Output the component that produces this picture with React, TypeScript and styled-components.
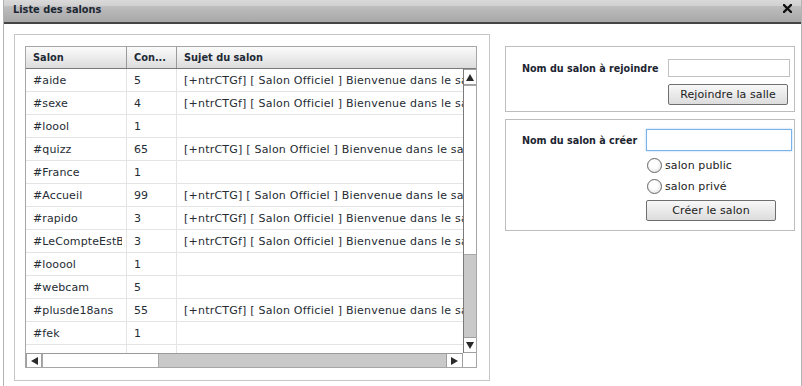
import styled, { createGlobalStyle } from 'styled-components';

const GlobalStyle = createGlobalStyle`
  html, body {
    margin: 0;
    padding: 0;
    background: #ffffff;
  }
  body {
    font-family: "DejaVu Sans", Verdana, sans-serif;
    font-size: 11px;
    color: #222;
  }
`;

const Dialog = styled.div`
  width: 797px;
  height: 386px;
  margin-left: 3px;
  border-left: 1px solid #b3b3b3;
  border-right: 1px solid #b3b3b3;
  background: #fff;
  display: flex;
  flex-direction: column;
  overflow: hidden;
`;

const TitleBar = styled.div`
  height: 24px;
  flex: 0 0 24px;
  border-bottom: 2px solid #454545;
  background: linear-gradient(#dadada 0%, #d0d0d0 26%, #bdbdbd 30%, #a8a8a8 100%);
  display: flex;
  align-items: flex-start;
  justify-content: space-between;
  padding: 3px 9px 0 9px;
  box-sizing: border-box;
`;

const Title = styled.span`
  font-weight: bold;
  font-size: 9.8px;
  line-height: 13px;
  color: #1c2733;
`;

const CloseButton = styled.button`
  border: none;
  background: none;
  padding: 0;
  margin-top: 1px;
  width: 9px;
  height: 9px;
  display: flex;
  cursor: pointer;
`;

const Content = styled.div`
  display: flex;
  gap: 15px;
  padding: 10px 6px 0 10px;
`;

const LeftPanel = styled.div`
  width: 476px;
  height: 347px;
  box-sizing: border-box;
  border: 1px solid #c6c6c6;
  padding: 11px 12px 12px 10px;
`;

const GridFrame = styled.div`
  width: 452px;
  height: 322px;
  box-sizing: border-box;
  border: 1px solid #a6a6a6;
  display: grid;
  grid-template-columns: 437px 13px;
  grid-template-rows: 22px 284px 14px;
`;

const HeaderRow = styled.div`
  grid-column: 1 / 3;
  display: flex;
  box-sizing: border-box;
  border-bottom: 1px solid #7a7a7a;
  background: linear-gradient(#fbfbfb, #dcdcdc);
  overflow: hidden;
`;

const HeaderCell = styled.div<{ $w: number; $last?: boolean }>`
  flex: 0 0 ${(p) => p.$w}px;
  min-width: 0;
  box-sizing: border-box;
  border-right: ${(p) => (p.$last ? 'none' : '1px solid #9a9a9a')};
  padding: 1px 0 0 7px;
  font-weight: bold;
  font-size: 9.8px;
  line-height: 20px;
  white-space: nowrap;
  color: #1e2a36;
`;

const Body = styled.div`
  overflow: hidden;
`;

const Row = styled.div`
  display: flex;
  height: 23px;
  box-sizing: border-box;
  border-bottom: 1px solid #e4e4e4;
`;

const Cell = styled.div<{ $w: number; $last?: boolean; $spacing?: number }>`
  flex: 0 0 ${(p) => p.$w}px;
  min-width: 0;
  box-sizing: border-box;
  border-right: ${(p) => (p.$last ? 'none' : '1px solid #e4e4e4')};
  padding: 2px 4px 0 7px;
  line-height: 20px;
  letter-spacing: ${(p) => p.$spacing ?? 0.1}px;
  color: #262c33;
`;

const CellText = styled.span`
  display: block;
  white-space: nowrap;
  overflow: hidden;
`;

const VScroll = styled.div`
  border-left: 1px solid #7a7a7a;
  display: flex;
  flex-direction: column;
`;

const HScroll = styled.div`
  border-top: 1px solid #9a9a9a;
  display: flex;
`;

const Corner = styled.div`
  background: #fff;
`;

const ArrowBox = styled.div<{ $size: number; $vertical?: boolean }>`
  flex: 0 0 ${(p) => p.$size}px;
  box-sizing: border-box;
  background: #fff;
  border: 1px solid #a0a0a0;
  ${(p) => (p.$vertical ? 'border-left: none; border-right: none;' : 'border-top: none; border-bottom: none;')}
  display: flex;
  align-items: center;
  justify-content: center;
`;

const Thumb = styled.div<{ $size: number; $vertical?: boolean }>`
  flex: 0 0 ${(p) => p.$size}px;
  box-sizing: border-box;
  background: #fff;
  border: 1px solid #a8a8a8;
  ${(p) => (p.$vertical ? 'border-left: none; border-right: none;' : 'border-top: none; border-bottom: none;')}
`;

const Track = styled.div`
  flex: 1;
  background: #c9c9c9;
`;

const RightColumn = styled.div`
  width: 290px;
  margin-top: 12px;
  display: flex;
  flex-direction: column;
  gap: 7px;
`;

const FormBox = styled.div<{ $pad: string; $cols: string }>`
  box-sizing: border-box;
  border: 1px solid #bdbdbd;
  padding: ${(p) => p.$pad};
  display: grid;
  grid-template-columns: ${(p) => p.$cols};
  align-items: center;
`;

const Label = styled.label`
  font-weight: bold;
  font-size: 9.6px;
  color: #1c2530;
  white-space: nowrap;
`;

const TextInput = styled.input<{ $h: number; $focused?: boolean }>`
  box-sizing: border-box;
  width: 100%;
  height: ${(p) => p.$h}px;
  margin: 0;
  padding: 0 3px;
  font: inherit;
  border: 1px solid ${(p) => (p.$focused ? '#7cb2ea' : '#c2c2c2')};
  box-shadow: ${(p) => (p.$focused ? '0 0 2px #a9d0f5, inset 0 0 1px #cfe4f8' : 'none')};
  outline: none;
  background: #fff;
`;

const Button = styled.button<{ $w: number; $mt: number }>`
  grid-column: 2;
  width: ${(p) => p.$w}px;
  height: 21px;
  margin-top: ${(p) => p.$mt}px;
  padding: 0;
  font-family: inherit;
  font-size: 11px;
  letter-spacing: 0.1px;
  color: #222;
  border: 1px solid #6f6f6f;
  border-radius: 2px;
  background: linear-gradient(#f8f8f8, #dcdcdc);
  cursor: pointer;
`;

const RadioGroup = styled.div`
  grid-column: 2;
  margin-top: 4px;
  display: flex;
  flex-direction: column;
`;

const RadioRow = styled.label`
  height: 21px;
  display: flex;
  align-items: center;
  gap: 3px;
  padding-left: 1px;
  letter-spacing: 0.1px;
  color: #222;
`;

const Radio = styled.input`
  appearance: none;
  margin: 0;
  width: 15px;
  height: 15px;
  border-radius: 50%;
  border: 1px solid #666;
  background: radial-gradient(circle at 45% 40%, #ffffff 35%, #d8d8d8 100%);
`;

const rows = [
  { name: '#aide', count: 5, topic: '[+ntrCTGf] [ Salon Officiel ] Bienvenue dans le salon d\'aide' },
  { name: '#sexe', count: 4, topic: '[+ntrCTGf] [ Salon Officiel ] Bienvenue dans le salon' },
  { name: '#loool', count: 1, topic: '' },
  { name: '#quizz', count: 65, topic: '[+ntrCTG] [ Salon Officiel ] Bienvenue dans le salon quizz' },
  { name: '#France', count: 1, topic: '' },
  { name: '#Accueil', count: 99, topic: '[+ntrCTG] [ Salon Officiel ] Bienvenue dans le salon' },
  { name: '#rapido', count: 3, topic: '[+ntrCTGf] [ Salon Officiel ] Bienvenue dans le salon' },
  { name: '#LeCompteEstBon', count: 3, topic: '[+ntrCTGf] [ Salon Officiel ] Bienvenue dans le salon' },
  { name: '#looool', count: 1, topic: '' },
  { name: '#webcam', count: 5, topic: '' },
  { name: '#plusde18ans', count: 55, topic: '[+ntrCTGf] [ Salon Officiel ] Bienvenue dans le salon' },
  { name: '#fek', count: 1, topic: '' },
  { name: '', count: '', topic: '' },
];

const Triangle = ({ dir }: { dir: 'up' | 'down' | 'left' | 'right' }) => {
  const pts = {
    up: '0,7 4,0 8,7',
    down: '0,0 8,0 4,7',
    left: '7,0 7,8 0,4',
    right: '0,0 7,4 0,8',
  }[dir];
  const vertical = dir === 'up' || dir === 'down';
  return (
    <svg width={vertical ? 8 : 7} height={vertical ? 7 : 8} viewBox={vertical ? '0 0 8 7' : '0 0 7 8'}>
      <polygon points={pts} fill="#2a2a2a" />
    </svg>
  );
};

const App = () => {
  return (
    <>
      <GlobalStyle />
      <Dialog>
        <TitleBar>
          <Title>Liste des salons</Title>
          <CloseButton aria-label="Fermer">
            <svg width="9" height="9" viewBox="0 0 9 9">
              <path d="M1 1 L8 8 M8 1 L1 8" stroke="#111" strokeWidth="2.3" strokeLinecap="square" />
            </svg>
          </CloseButton>
        </TitleBar>
        <Content>
          <LeftPanel>
            <GridFrame>
              <HeaderRow>
                <HeaderCell $w={101}>Salon</HeaderCell>
                <HeaderCell $w={50}>Con...</HeaderCell>
                <HeaderCell $w={300} $last>Sujet du salon</HeaderCell>
              </HeaderRow>
              <Body>
                {rows.map((r, i) => (
                  <Row key={i}>
                    <Cell $w={101}><CellText>{r.name}</CellText></Cell>
                    <Cell $w={50}><CellText>{r.count}</CellText></Cell>
                    <Cell $w={420} $last $spacing={0.22}><CellText>{r.topic}</CellText></Cell>
                  </Row>
                ))}
              </Body>
              <VScroll>
                <ArrowBox $size={16} $vertical>
                  <Triangle dir="up" />
                </ArrowBox>
                <Thumb $size={170} $vertical />
                <Track />
                <ArrowBox $size={16} $vertical>
                  <Triangle dir="down" />
                </ArrowBox>
              </VScroll>
              <HScroll>
                <ArrowBox $size={16}>
                  <Triangle dir="left" />
                </ArrowBox>
                <Thumb $size={117} />
                <Track />
                <ArrowBox $size={17}>
                  <Triangle dir="right" />
                </ArrowBox>
              </HScroll>
              <Corner />
            </GridFrame>
          </LeftPanel>

          <RightColumn>
            <FormBox $pad="12px 4px 6px 16px" $cols="146px 122px">
              <Label htmlFor="join">Nom du salon à rejoindre</Label>
              <TextInput id="join" $h={18} />
              <Button $w={120} $mt={7}>Rejoindre la salle</Button>
            </FormBox>

            <FormBox $pad="9px 2px 9px 16px" $cols="124px 146px">
              <Label htmlFor="create">Nom du salon à créer</Label>
              <TextInput id="create" $h={22} $focused />
              <RadioGroup>
                <RadioRow>
                  <Radio type="radio" name="kind" />
                  salon public
                </RadioRow>
                <RadioRow>
                  <Radio type="radio" name="kind" />
                  salon privé
                </RadioRow>
              </RadioGroup>
              <Button $w={130} $mt={3}>Créer le salon</Button>
            </FormBox>
          </RightColumn>
        </Content>
      </Dialog>
    </>
  );
};

export default App;
